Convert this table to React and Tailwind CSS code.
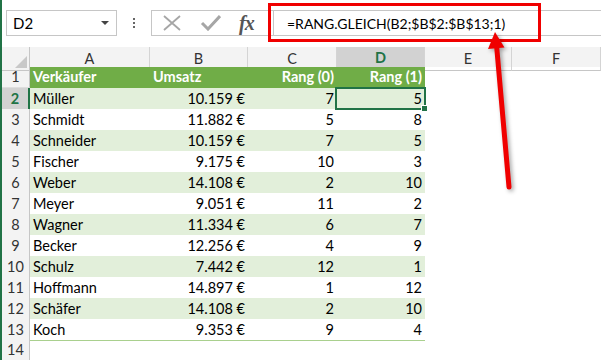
import React from "react";

const rows = [
  ["Müller", "10.159 €", 7, 5],
  ["Schmidt", "11.882 €", 5, 8],
  ["Schneider", "10.159 €", 7, 5],
  ["Fischer", "9.175 €", 10, 3],
  ["Weber", "14.108 €", 2, 10],
  ["Meyer", "9.051 €", 11, 2],
  ["Wagner", "11.334 €", 6, 7],
  ["Becker", "12.256 €", 4, 9],
  ["Schulz", "7.442 €", 12, 1],
  ["Hoffmann", "14.897 €", 1, 12],
  ["Schäfer", "14.108 €", 2, 10],
  ["Koch", "9.353 €", 9, 4],
];

const cols = "grid grid-cols-[28px_120px_98px_89px_88px_87px_1fr]";

function ColHead({ label, sel }) {
  return sel ? (
    <div className="flex items-center justify-center border-r border-[#d4d4d4] border-b-2 border-b-[#217346] bg-[#d2d2d2] font-bold text-[#217346]">
      {label}
    </div>
  ) : (
    <div className="flex items-center justify-center border-r border-[#d4d4d4] border-b border-b-[#c6c6c6] text-[#333]">
      {label}
    </div>
  );
}

function RowHead({ n, sel }) {
  return sel ? (
    <div className="flex items-center justify-center border-r-2 border-r-[#217346] border-b border-b-[#c8c8c8] bg-[#d2d2d2] font-bold text-[#217346] leading-[20px]">
      {n}
    </div>
  ) : (
    <div className="flex items-center justify-center border-r border-r-[#c6c6c6] border-b border-b-[#dedede] bg-[#f3f3f3] text-[#333] leading-[20px]">
      {n}
    </div>
  );
}

export default function App() {
  return (
    <div className="relative w-[601px] h-[360px] overflow-hidden bg-white flex font-[Lato] text-[14.5px] text-black">
      <div className="w-[2px] shrink-0 bg-[#217346]" />
      <div className="flex-1 flex flex-col min-w-0">
        {/* toolbar */}
        <div className="h-[47px] shrink-0 flex items-start pt-[10px]">
          <div className="ml-[4px] w-[111px] h-[26px] border border-[#c6c6c6] flex items-center justify-between pl-[6px] pr-[7px]">
            <span className="text-[15px]">D2</span>
            <svg width="8" height="4" viewBox="0 0 8 4">
              <path d="M0 0 H8 L4 4 Z" fill="#444" />
            </svg>
          </div>
          <div className="w-[34px] h-[26px] flex flex-col items-center justify-center gap-[2px]">
            <div className="w-[2px] h-[2px] bg-[#666]" />
            <div className="w-[2px] h-[2px] bg-[#666]" />
            <div className="w-[2px] h-[2px] bg-[#666]" />
          </div>
          <div className="flex-1 h-[26px] border border-r-0 border-[#c6c6c6] flex">
            <div className="w-[121px] shrink-0 flex items-center pl-[11px]">
              <svg width="18" height="16" viewBox="0 0 18 16">
                <path d="M1 1 L17 15 M17 1 L1 15" stroke="#a6a6a6" strokeWidth="1.8" fill="none" />
              </svg>
              <svg className="ml-[19px]" width="21" height="16" viewBox="0 0 21 16">
                <path d="M2 8 L8 14 L20 1" stroke="#a6a6a6" strokeWidth="3" fill="none" />
              </svg>
              <span className="ml-[18px] font-['Liberation_Serif'] italic font-bold text-[20px] leading-none text-[#555] tracking-[-1px]">
                fx
              </span>
            </div>
            <div className="flex-1 border-l border-[#c6c6c6] flex items-center pl-[13px] text-[14px] whitespace-nowrap">
              =RANG.GLEICH(B2;$B$2:$B$13;1)
            </div>
          </div>
        </div>

        {/* column headers */}
        <div className={`${cols} h-[20px] bg-[#f3f3f3]`}>
          <div className="relative border-r border-[#c6c6c6] border-b border-b-[#c6c6c6]">
            <svg className="absolute right-[2px] bottom-[2px]" width="12" height="12" viewBox="0 0 12 12">
              <path d="M12 0 V12 H0 Z" fill="#c8c8c8" />
            </svg>
          </div>
          <ColHead label="A" />
          <ColHead label="B" />
          <ColHead label="C" />
          <ColHead label="D" sel />
          <ColHead label="E" />
          <ColHead label="F" />
        </div>

        {/* header row 1 */}
        <div className={`${cols} h-[21px]`}>
          <RowHead n={1} />
          <div className="bg-[#70ad47] border-b border-[#70ad47] text-white font-bold pl-[3px] leading-[20px]">Verkäufer</div>
          <div className="bg-[#70ad47] border-b border-[#70ad47] text-white font-bold pl-[3px] leading-[20px]">Umsatz</div>
          <div className="bg-[#70ad47] border-b border-[#70ad47] text-white font-bold pr-[3px] text-right leading-[20px]">Rang (0)</div>
          <div className="bg-[#70ad47] border-b border-[#70ad47] text-white font-bold pr-[3px] text-right leading-[20px]">Rang (1)</div>
          <div />
          <div />
        </div>

        {rows.map((r, i) => {
          const bg = i % 2 === 0 ? "bg-[#e2efda]" : "bg-white";
          const sel = i === 0;
          return (
            <div key={i} className={`${cols} h-[21px] shrink-0`}>
              <RowHead n={i + 2} sel={sel} />
              <div className={`${bg} border-b border-[#a9d08e] pl-[3px] leading-[20px] pt-[1px]`}>{r[0]}</div>
              <div className={`${bg} border-b border-[#a9d08e] pr-[3px] text-right leading-[20px] pt-[1px]`}>{r[1]}</div>
              <div className={`${bg} border-b border-[#a9d08e] pr-[3px] text-right leading-[20px] pt-[1px]`}>{r[2]}</div>
              <div className={`relative ${bg} border-b border-[#a9d08e] pr-[3px] text-right leading-[20px] pt-[1px]`}>
                {r[3]}
                {sel && (
                  <div className="absolute -left-[2px] -top-[1px] -right-[1px] -bottom-[1px] border-2 border-[#217346] z-10">
                    <div className="absolute -right-[4px] -bottom-[4px] w-[7px] h-[7px] bg-[#217346] border border-white" />
                  </div>
                )}
              </div>
              <div />
              <div />
            </div>
          );
        })}

        <div className={`${cols} h-[21px] shrink-0`}>
          <RowHead n={14} />
        </div>
      </div>

      {/* annotation: red box */}
      <div className="absolute left-[268px] top-[3px] w-[273px] h-[39px] border-[3px] border-[#f00000] pointer-events-none" />

      {/* annotation: arrow */}
      <svg
        className="absolute inset-0 pointer-events-none drop-shadow-[2px_2px_2px_rgba(0,0,0,0.35)]"
        width="601"
        height="360"
        viewBox="0 0 601 360"
      >
        <path d="M509 187 L496.6 46" stroke="#f00000" strokeWidth="5" strokeLinecap="round" fill="none" />
        <path d="M495 32 L488 49 L504.5 47.5 Z" fill="#f00000" />
      </svg>
    </div>
  );
}
